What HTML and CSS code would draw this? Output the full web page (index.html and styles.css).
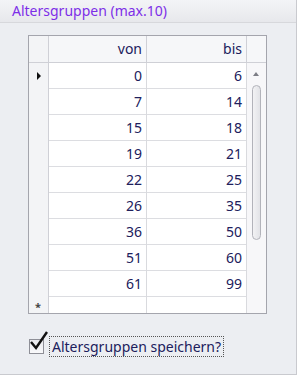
FILE: index.html
```html
<!DOCTYPE html>
<html lang="de">
<head>
  <meta charset="UTF-8">
  <title>Altersgruppen</title>
  <link rel="stylesheet" href="styles.css">
</head>
<body>
  <div class="panel">
    <div class="panel-title">Altersgruppen (max.10)</div>

    <div class="grid">
      <div class="grid-head">
        <div class="cell indicator"></div>
        <div class="cell">von</div>
        <div class="cell">bis</div>
        <div class="cell corner"></div>
      </div>
      <div class="grid-body">
        <div class="rows">
          <div class="row current"><div class="cell indicator"><span class="arrow"></span></div><div class="cell">0</div><div class="cell">6</div></div>
          <div class="row"><div class="cell indicator"></div><div class="cell">7</div><div class="cell">14</div></div>
          <div class="row"><div class="cell indicator"></div><div class="cell">15</div><div class="cell">18</div></div>
          <div class="row"><div class="cell indicator"></div><div class="cell">19</div><div class="cell">21</div></div>
          <div class="row"><div class="cell indicator"></div><div class="cell">22</div><div class="cell">25</div></div>
          <div class="row"><div class="cell indicator"></div><div class="cell">26</div><div class="cell">35</div></div>
          <div class="row"><div class="cell indicator"></div><div class="cell">36</div><div class="cell">50</div></div>
          <div class="row"><div class="cell indicator"></div><div class="cell">51</div><div class="cell">60</div></div>
          <div class="row"><div class="cell indicator"></div><div class="cell">61</div><div class="cell">99</div></div>
          <div class="row new"><div class="cell indicator"><span class="star">*</span></div><div class="cell"></div><div class="cell"></div></div>
        </div>
        <div class="scrollbar">
          <span class="sb-up"></span>
          <span class="sb-thumb"></span>
          <span class="sb-down"></span>
        </div>
      </div>
    </div>

    <label class="save">
      <span class="checkbox">
        <svg width="22" height="22" viewBox="0 0 22 22"><path d="M3 11 L8 17 L19 1" fill="none" stroke="#111" stroke-width="2.4"/></svg>
      </span>
      <span class="save-text">Altersgruppen speichern?</span>
    </label>
  </div>
</body>
</html>
```

FILE: styles.css
```css
* {
  box-sizing: border-box;
  margin: 0;
  padding: 0;
}

body {
  font-family: "Noto Sans", Arial, sans-serif;
  font-size: 14px;
  background-color: #fff;
  color: #20205c;
}

.panel {
  width: 297px;
  height: 375px;
  background-color: #eceef2;
  border-right: 1px solid #c9cacf;
  border-bottom: 1px solid #c9cacf;
}

.panel-title {
  height: 23px;
  padding: 2px 0 0 12px;
  color: #7d2ee8;
  background: linear-gradient(#f3f4f7, #e7e8ec);
  border-bottom: 1px solid #d7d8dc;
  line-height: 18px;
}

/* Tabelle */
.grid {
  margin: 12px 0 0 28px;
  width: 239px;
  height: 279px;
  border: 1px solid #a4a5ad;
  background-color: #fff;
  overflow: hidden;
}

.grid-head,
.row {
  display: grid;
  grid-template-columns: 20px 98px 100px;
}

.grid-head {
  grid-template-columns: 20px 98px 100px 1fr;
  height: 27px;
  background-color: #f6f7f9;
  border-bottom: 1px solid #cfd0d6;
}

.cell {
  border-right: 1px solid #d9dade;
  text-align: right;
  padding-right: 4px;
  line-height: 26px;
}

.grid-head .cell {
  border-right-color: #cfd0d6;
}

.cell.corner {
  border-right: none;
}

.grid-body {
  display: flex;
}

.rows {
  width: 218px;
}

.row {
  height: 26px;
  border-bottom: 1px solid #dcdde1;
}

.row.new {
  height: 16px;
  border-bottom: none;
}

.cell.indicator {
  background-color: #f3f4f6;
  border-right-color: #cfd0d6;
  position: relative;
}

.arrow {
  position: absolute;
  left: 8px;
  top: 9px;
  border-left: 4px solid #111;
  border-top: 4px solid transparent;
  border-bottom: 4px solid transparent;
}

.star {
  position: absolute;
  left: 6px;
  top: 5px;
  font-size: 11px;
  line-height: 10px;
  font-weight: bold;
  color: #444;
}

/* Scrollbalken */
.scrollbar {
  position: relative;
  width: 19px;
  height: 250px;
  background-color: #f7f7f9;
}

.sb-up,
.sb-down {
  position: absolute;
  left: 6px;
  border-left: 3px solid transparent;
  border-right: 3px solid transparent;
}

.sb-up {
  top: 9px;
  border-bottom: 4px solid #7c7d85;
}

.sb-down {
  bottom: -4px;
  border-top: 4px solid #9c9da4;
}

.sb-thumb {
  position: absolute;
  left: 5px;
  top: 22px;
  width: 9px;
  height: 155px;
  border: 1px solid #b2b3ba;
  border-radius: 5px;
  background: linear-gradient(to right, #f2f2f4, #e2e3e7);
}

/* Checkbox */
.save {
  display: flex;
  align-items: center;
  margin: 21px 0 0 29px;
  height: 22px;
}

.checkbox {
  position: relative;
  width: 15px;
  height: 15px;
  border: 1px solid #8e8f97;
  background: linear-gradient(#e8e9ed, #f9f9fb);
}

.checkbox svg {
  position: absolute;
  left: -2px;
  top: -9px;
}

.save-text {
  margin-left: 5px;
  padding: 0 2px;
  border: 1px dotted #555;
  line-height: 19px;
}
```
